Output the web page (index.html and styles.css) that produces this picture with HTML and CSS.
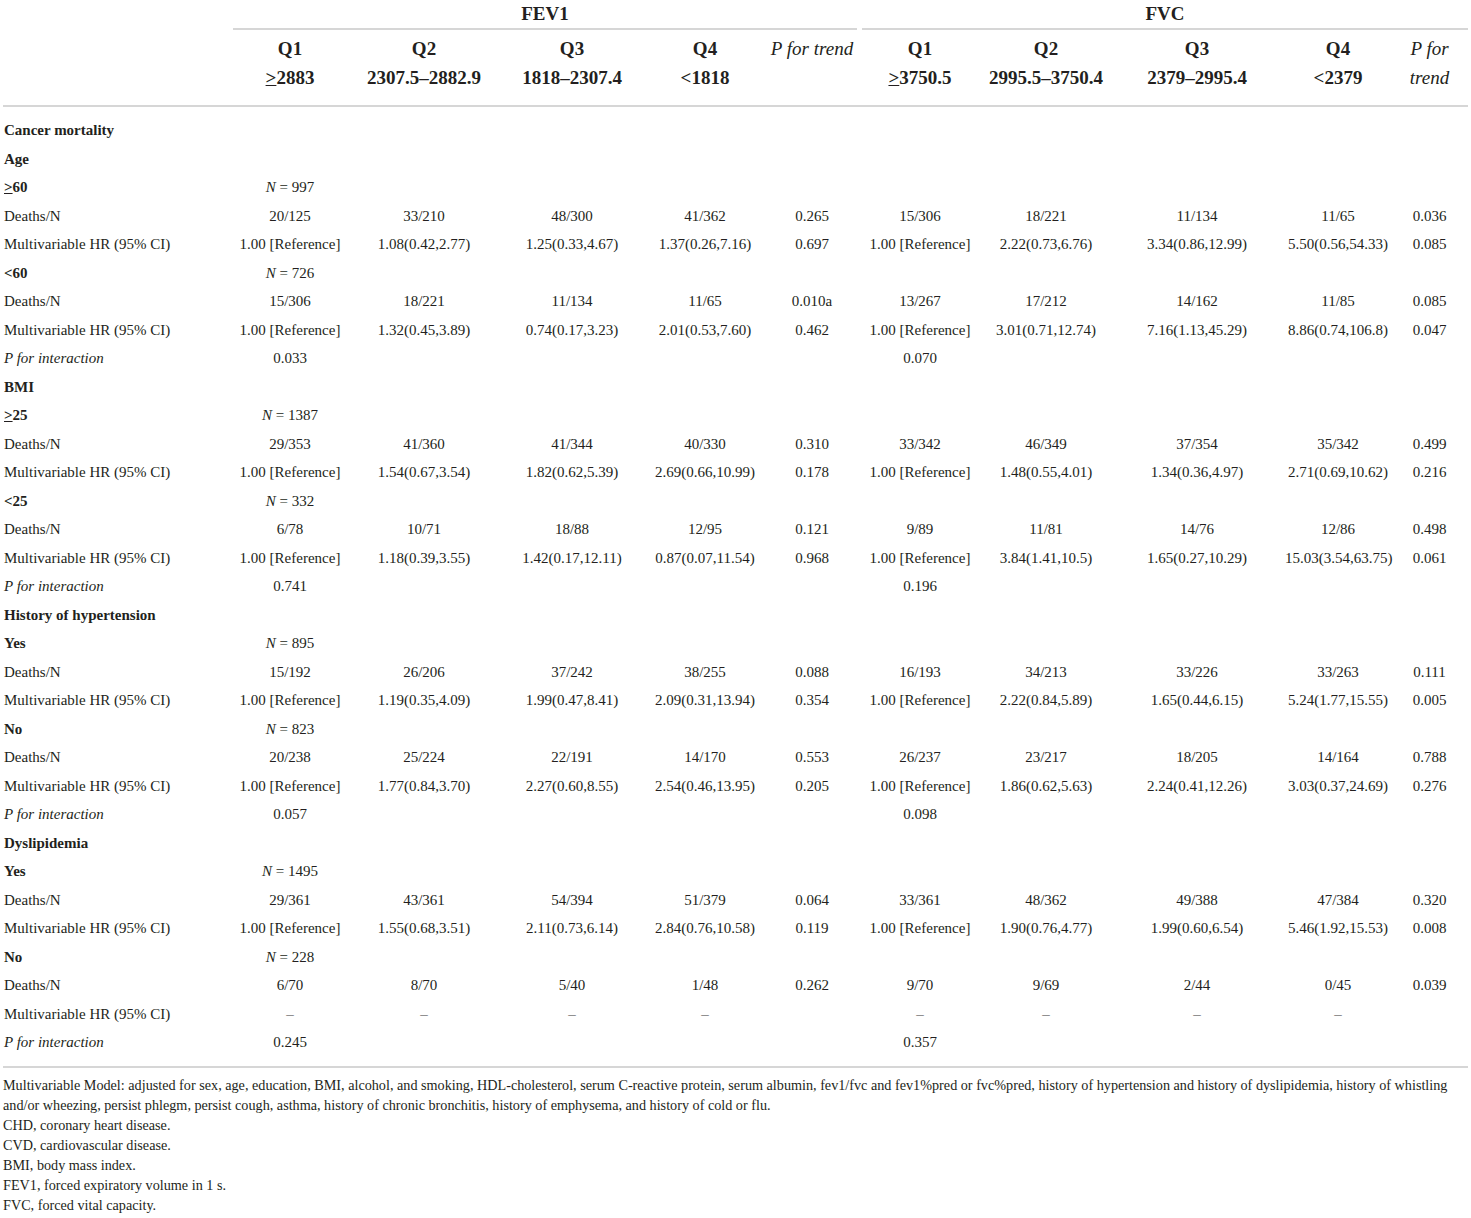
FILE: index.html
```html
<!DOCTYPE html>
<html>
	<head>
		<meta charset="utf-8">
		<link rel="stylesheet" href="styles.css">
	</head>
	<body>
		<div class="wrap">
			<table class="data">
				<colgroup>
					<col class="c-label">
					<col class="c-q1"><col class="c-q2"><col class="c-q3"><col class="c-q4"><col class="c-p">
					<col class="c-fq1"><col class="c-fq2"><col class="c-fq3"><col class="c-fq4"><col class="c-fp">
				</colgroup>
				<thead>
					<tr class="top">
						<th rowspan="2" class="corner"></th>
						<th colspan="5"><div class="spanner">FEV1</div></th>
						<th colspan="5"><div class="spanner right">FVC</div></th>
					</tr>
					<tr class="quart">
						<th>Q1<br><u>&gt;</u>2883</th>
						<th>Q2<br>2307.5–2882.9</th>
						<th>Q3<br>1818–2307.4</th>
						<th>Q4<br>&lt;1818</th>
						<th class="it">P for trend</th>
						<th>Q1<br><u>&gt;</u>3750.5</th>
						<th>Q2<br>2995.5–3750.4</th>
						<th>Q3<br>2379–2995.4</th>
						<th>Q4<br>&lt;2379</th>
						<th class="it">P for<br>trend</th>
					</tr>
				</thead>
				<tbody>
					<tr class="first"><td class="b">Cancer mortality</td><td></td><td></td><td></td><td></td><td></td><td></td><td></td><td></td><td></td><td></td></tr>
					<tr><td class="b">Age</td><td></td><td></td><td></td><td></td><td></td><td></td><td></td><td></td><td></td><td></td></tr>
					<tr><td class="b"><u>&gt;</u>60</td><td><i>N</i> = 997</td><td></td><td></td><td></td><td></td><td></td><td></td><td></td><td></td><td></td></tr>
					<tr><td>Deaths/N</td><td>20/125</td><td>33/210</td><td>48/300</td><td>41/362</td><td>0.265</td><td>15/306</td><td>18/221</td><td>11/134</td><td>11/65</td><td>0.036</td></tr>
					<tr><td>Multivariable HR (95% CI)</td><td>1.00 [Reference]</td><td>1.08(0.42,2.77)</td><td>1.25(0.33,4.67)</td><td>1.37(0.26,7.16)</td><td>0.697</td><td>1.00 [Reference]</td><td>2.22(0.73,6.76)</td><td>3.34(0.86,12.99)</td><td>5.50(0.56,54.33)</td><td>0.085</td></tr>
					<tr><td class="b">&lt;60</td><td><i>N</i> = 726</td><td></td><td></td><td></td><td></td><td></td><td></td><td></td><td></td><td></td></tr>
					<tr><td>Deaths/N</td><td>15/306</td><td>18/221</td><td>11/134</td><td>11/65</td><td>0.010a</td><td>13/267</td><td>17/212</td><td>14/162</td><td>11/85</td><td>0.085</td></tr>
					<tr><td>Multivariable HR (95% CI)</td><td>1.00 [Reference]</td><td>1.32(0.45,3.89)</td><td>0.74(0.17,3.23)</td><td>2.01(0.53,7.60)</td><td>0.462</td><td>1.00 [Reference]</td><td>3.01(0.71,12.74)</td><td>7.16(1.13,45.29)</td><td>8.86(0.74,106.8)</td><td>0.047</td></tr>
					<tr><td class="it">P for interaction</td><td>0.033</td><td></td><td></td><td></td><td></td><td>0.070</td><td></td><td></td><td></td><td></td></tr>
					<tr><td class="b">BMI</td><td></td><td></td><td></td><td></td><td></td><td></td><td></td><td></td><td></td><td></td></tr>
					<tr><td class="b"><u>&gt;</u>25</td><td><i>N</i> = 1387</td><td></td><td></td><td></td><td></td><td></td><td></td><td></td><td></td><td></td></tr>
					<tr><td>Deaths/N</td><td>29/353</td><td>41/360</td><td>41/344</td><td>40/330</td><td>0.310</td><td>33/342</td><td>46/349</td><td>37/354</td><td>35/342</td><td>0.499</td></tr>
					<tr><td>Multivariable HR (95% CI)</td><td>1.00 [Reference]</td><td>1.54(0.67,3.54)</td><td>1.82(0.62,5.39)</td><td>2.69(0.66,10.99)</td><td>0.178</td><td>1.00 [Reference]</td><td>1.48(0.55,4.01)</td><td>1.34(0.36,4.97)</td><td>2.71(0.69,10.62)</td><td>0.216</td></tr>
					<tr><td class="b">&lt;25</td><td><i>N</i> = 332</td><td></td><td></td><td></td><td></td><td></td><td></td><td></td><td></td><td></td></tr>
					<tr><td>Deaths/N</td><td>6/78</td><td>10/71</td><td>18/88</td><td>12/95</td><td>0.121</td><td>9/89</td><td>11/81</td><td>14/76</td><td>12/86</td><td>0.498</td></tr>
					<tr><td>Multivariable HR (95% CI)</td><td>1.00 [Reference]</td><td>1.18(0.39,3.55)</td><td>1.42(0.17,12.11)</td><td>0.87(0.07,11.54)</td><td>0.968</td><td>1.00 [Reference]</td><td>3.84(1.41,10.5)</td><td>1.65(0.27,10.29)</td><td>15.03(3.54,63.75)</td><td>0.061</td></tr>
					<tr><td class="it">P for interaction</td><td>0.741</td><td></td><td></td><td></td><td></td><td>0.196</td><td></td><td></td><td></td><td></td></tr>
					<tr><td class="b">History of hypertension</td><td></td><td></td><td></td><td></td><td></td><td></td><td></td><td></td><td></td><td></td></tr>
					<tr><td class="b">Yes</td><td><i>N</i> = 895</td><td></td><td></td><td></td><td></td><td></td><td></td><td></td><td></td><td></td></tr>
					<tr><td>Deaths/N</td><td>15/192</td><td>26/206</td><td>37/242</td><td>38/255</td><td>0.088</td><td>16/193</td><td>34/213</td><td>33/226</td><td>33/263</td><td>0.111</td></tr>
					<tr><td>Multivariable HR (95% CI)</td><td>1.00 [Reference]</td><td>1.19(0.35,4.09)</td><td>1.99(0.47,8.41)</td><td>2.09(0.31,13.94)</td><td>0.354</td><td>1.00 [Reference]</td><td>2.22(0.84,5.89)</td><td>1.65(0.44,6.15)</td><td>5.24(1.77,15.55)</td><td>0.005</td></tr>
					<tr><td class="b">No</td><td><i>N</i> = 823</td><td></td><td></td><td></td><td></td><td></td><td></td><td></td><td></td><td></td></tr>
					<tr><td>Deaths/N</td><td>20/238</td><td>25/224</td><td>22/191</td><td>14/170</td><td>0.553</td><td>26/237</td><td>23/217</td><td>18/205</td><td>14/164</td><td>0.788</td></tr>
					<tr><td>Multivariable HR (95% CI)</td><td>1.00 [Reference]</td><td>1.77(0.84,3.70)</td><td>2.27(0.60,8.55)</td><td>2.54(0.46,13.95)</td><td>0.205</td><td>1.00 [Reference]</td><td>1.86(0.62,5.63)</td><td>2.24(0.41,12.26)</td><td>3.03(0.37,24.69)</td><td>0.276</td></tr>
					<tr><td class="it">P for interaction</td><td>0.057</td><td></td><td></td><td></td><td></td><td>0.098</td><td></td><td></td><td></td><td></td></tr>
					<tr><td class="b">Dyslipidemia</td><td></td><td></td><td></td><td></td><td></td><td></td><td></td><td></td><td></td><td></td></tr>
					<tr><td class="b">Yes</td><td><i>N</i> = 1495</td><td></td><td></td><td></td><td></td><td></td><td></td><td></td><td></td><td></td></tr>
					<tr><td>Deaths/N</td><td>29/361</td><td>43/361</td><td>54/394</td><td>51/379</td><td>0.064</td><td>33/361</td><td>48/362</td><td>49/388</td><td>47/384</td><td>0.320</td></tr>
					<tr><td>Multivariable HR (95% CI)</td><td>1.00 [Reference]</td><td>1.55(0.68,3.51)</td><td>2.11(0.73,6.14)</td><td>2.84(0.76,10.58)</td><td>0.119</td><td>1.00 [Reference]</td><td>1.90(0.76,4.77)</td><td>1.99(0.60,6.54)</td><td>5.46(1.92,15.53)</td><td>0.008</td></tr>
					<tr><td class="b">No</td><td><i>N</i> = 228</td><td></td><td></td><td></td><td></td><td></td><td></td><td></td><td></td><td></td></tr>
					<tr><td>Deaths/N</td><td>6/70</td><td>8/70</td><td>5/40</td><td>1/48</td><td>0.262</td><td>9/70</td><td>9/69</td><td>2/44</td><td>0/45</td><td>0.039</td></tr>
					<tr><td>Multivariable HR (95% CI)</td><td class="dash">–</td><td class="dash">–</td><td class="dash">–</td><td class="dash">–</td><td></td><td class="dash">–</td><td class="dash">–</td><td class="dash">–</td><td class="dash">–</td><td></td></tr>
					<tr class="last"><td class="it">P for interaction</td><td>0.245</td><td></td><td></td><td></td><td></td><td>0.357</td><td></td><td></td><td></td><td></td></tr>
				</tbody>
			</table>
			<div class="notes">
				<p>Multivariable Model: adjusted for sex, age, education, BMI, alcohol, and smoking, HDL-cholesterol, serum C-reactive protein, serum albumin, fev1/fvc and fev1%pred or fvc%pred, history of hypertension and history of dyslipidemia, history of whistling and/or wheezing, persist phlegm, persist cough, asthma, history of chronic bronchitis, history of emphysema, and history of cold or flu.</p>
				<p>CHD, coronary heart disease.</p>
				<p>CVD, cardiovascular disease.</p>
				<p>BMI, body mass index.</p>
				<p>FEV1, forced expiratory volume in 1 s.</p>
				<p>FVC, forced vital capacity.</p>
			</div>
		</div>
	</body>
</html>
```

FILE: styles.css
```css
body {
	margin: 0;
	background: #fff;
	color: #231f20;
	font-family: "Liberation Serif", "Times New Roman", serif;
}

.wrap {
	width: 1465px;
	padding: 0 3px;
}

table.data {
	width: 1465px;
	table-layout: fixed;
	border-collapse: collapse;
	border-spacing: 0;
}

/* column widths, taken from the centres of the values */
.c-label { width: 230px; }
.c-q1 { width: 114px; }
.c-q2 { width: 154px; }
.c-q3 { width: 142px; }
.c-q4 { width: 124px; }
.c-p { width: 90px; }
.c-fq1 { width: 126px; }
.c-fq2 { width: 126px; }
.c-fq3 { width: 176px; }
.c-fq4 { width: 106px; }
.c-fp { width: 77px; }

.data th {
	padding: 0;
	font-size: 19px;
	font-weight: bold;
	text-align: center;
	white-space: nowrap;
}

.data th.it {
	font-weight: normal;
	font-style: italic;
	vertical-align: top;
}

.data th.corner {
	border-bottom: 2px solid #d6d6d6;
}

.data th u,
.data td u {
	text-decoration: underline;
	text-underline-offset: 1px;
}

.top th {
	vertical-align: bottom;
}

.spanner {
	line-height: 28px;
	border-bottom: 2px solid #d6d6d6;
}

.spanner.right {
	margin-left: 5px;
}

.quart th {
	line-height: 29px;
	padding: 4px 0 13px;
	border-bottom: 2px solid #d6d6d6;
	vertical-align: top;
}

.data td {
	padding: 0;
	font-size: 15px;
	line-height: 28.5px;
	text-align: center;
	white-space: nowrap;
}

.data td:first-child {
	text-align: left;
	padding-left: 1px;
}

.data td.b {
	font-weight: bold;
}

.data td.it {
	font-style: italic;
}

.data td.dash {
	color: #777;
}

.first td {
	padding-top: 9px;
}

.last td {
	padding-bottom: 9px;
	border-bottom: 2px solid #d6d6d6;
}

.notes {
	padding-top: 7px;
	font-size: 14.2px;
	line-height: 20px;
}

.notes p {
	margin: 0;
}
```
